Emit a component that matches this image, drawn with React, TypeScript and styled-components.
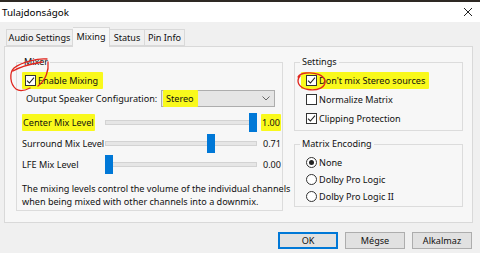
import React from "react";
import styled, { createGlobalStyle } from "styled-components";

const GlobalStyle = createGlobalStyle`
  html, body { margin: 0; padding: 0; background: #f0f0f0; }
  body { font-family: "Noto Sans", "Segoe UI", sans-serif; }
  * { box-sizing: border-box; }
`;

const PANEL_BG = "#f7f7f7";
const HILITE = "#f9f91c";

const Window = styled.div`
  position: relative;
  width: 480px;
  height: 253px;
  overflow: hidden;
  background: #f0f0f0;
  display: flex;
  flex-direction: column;
  font-size: 9.1px;
  color: #111;
`;

const TitleBar = styled.div`
  height: 22px;
  border-top: 2px solid #2e2924;
  background: #fff;
  display: flex;
  align-items: center;
  justify-content: space-between;
  padding: 0 7px 0 2px;
  font-size: 9.8px;
  color: #000;
`;

const Body = styled.div`
  flex: 1;
  display: flex;
  flex-direction: column;
  padding: 7px 7px 0 4px;
`;

const TabRow = styled.div`
  display: flex;
  align-items: flex-end;
  height: 17px;
  padding-left: 2px;
  position: relative;
  z-index: 1;
`;

const Tab = styled.div<{ $active?: boolean; $w: number }>`
  width: ${(p) => p.$w}px;
  height: ${(p) => (p.$active ? 20 : 17)}px;
  margin-bottom: ${(p) => (p.$active ? -1 : 0)}px;
  border: 1px solid #d9d9d9;
  border-bottom: ${(p) => (p.$active ? "none" : "1px solid #d9d9d9")};
  background: ${(p) => (p.$active ? PANEL_BG : "#f0f0f0")};
  display: flex;
  align-items: ${(p) => (p.$active ? "flex-start" : "center")};
  padding-top: ${(p) => (p.$active ? 2 : 0)}px;
  justify-content: center;
  white-space: nowrap;
  & + & {
    border-left: none;
  }
`;

const Panel = styled.div`
  height: 177px;
  border: 1px solid #d9d9d9;
  background: ${PANEL_BG};
  display: flex;
  gap: 11px;
  padding: 15px 8px 10px 11px;
`;

const Group = styled.div<{ $w?: number; $h: number; $pad: string }>`
  position: relative;
  width: ${(p) => (p.$w ? `${p.$w}px` : "auto")};
  height: ${(p) => p.$h}px;
  border: 1px solid #dcdcdc;
  padding: ${(p) => p.$pad};
  display: flex;
  flex-direction: column;
`;

const Caption = styled.span`
  position: absolute;
  top: -8px;
  left: 5px;
  padding: 0 2px;
  line-height: 14px;
  background: ${PANEL_BG};
  color: #111;
`;

const RightColumn = styled.div`
  width: 169px;
  display: flex;
  flex-direction: column;
  gap: 13px;
`;

const Row = styled.div<{ $h: number }>`
  height: ${(p) => p.$h}px;
  display: flex;
  align-items: center;
  white-space: nowrap;
`;

const Highlight = styled.span<{ $pl?: number; $pr?: number }>`
  display: inline-flex;
  align-items: center;
  gap: 2px;
  background: ${HILITE};
  padding: 2px ${(p) => p.$pr ?? 3}px 2px ${(p) => p.$pl ?? 2}px;
  border-radius: 1px;
`;

const Box = styled.span`
  width: 11px;
  height: 11px;
  border: 1px solid #333;
  background: #fff;
  display: inline-flex;
  align-items: center;
  justify-content: center;
  flex: none;
`;

const Round = styled.span`
  width: 11px;
  height: 11px;
  border: 1px solid #333;
  border-radius: 50%;
  background: #fff;
  display: inline-flex;
  align-items: center;
  justify-content: center;
  flex: none;
`;

const Dot = styled.span`
  width: 5px;
  height: 5px;
  border-radius: 50%;
  background: #222;
`;

const OptionRow = styled.div<{ $h: number; $pl?: number }>`
  height: ${(p) => p.$h}px;
  display: flex;
  align-items: center;
  gap: 2px;
  padding-left: ${(p) => p.$pl ?? 0}px;
  white-space: nowrap;
`;

const SpeakerRow = styled(Row)`
  justify-content: space-between;
  padding-left: 4px;
  padding-right: 6px;
`;

const Select = styled.div`
  width: 114px;
  height: 17px;
  background: #e5e5e5;
  border: 1px solid #adadad;
  display: flex;
  align-items: center;
  justify-content: space-between;
  padding: 0 4px 0 1px;
`;

const SliderRow = styled.div<{ $mt?: number }>`
  display: grid;
  grid-template-columns: 83px 152px 1fr;
  align-items: center;
  height: 21px;
  margin-top: ${(p) => p.$mt ?? 0}px;
  white-space: nowrap;
`;

const Track = styled.div`
  position: relative;
  height: 21px;
  display: flex;
  align-items: center;
  &::before {
    content: "";
    flex: 1;
    height: 3px;
    background: #e6e6e6;
    border: 1px solid #d3d3d3;
  }
`;

const Thumb = styled.span`
  position: absolute;
  top: 1px;
  width: 8px;
  height: 19px;
  background: #0078d7;
`;

const Value = styled.span`
  justify-self: end;
  display: inline-flex;
`;

const Description = styled.p`
  margin: 7px 0 0 0;
  line-height: 13px;
  white-space: nowrap;
`;

const ButtonRow = styled.div`
  display: flex;
  justify-content: flex-end;
  gap: 7px;
  margin-top: 9px;
  padding-right: 1px;
`;

const Button = styled.div<{ $default?: boolean }>`
  width: 60px;
  height: 17px;
  background: #e1e1e1;
  border: 1px solid ${(p) => (p.$default ? "#0078d7" : "#adadad")};
  box-shadow: ${(p) => (p.$default ? "inset 0 0 0 1px #0078d7" : "none")};
  display: flex;
  align-items: center;
  justify-content: center;
  color: #111;
`;

const Marks = styled.svg`
  position: absolute;
  left: 0;
  top: 0;
  pointer-events: none;
`;

const Check = () => (
  <svg width="9" height="9" viewBox="0 0 9 9">
    <path d="M1 4.6 L3.4 7 L8 1.6" fill="none" stroke="#222" strokeWidth="1.1" />
  </svg>
);

const CheckBox = ({ checked }: { checked?: boolean }) => (
  <Box>{checked && <Check />}</Box>
);

const Radio = ({ checked }: { checked?: boolean }) => (
  <Round>{checked && <Dot />}</Round>
);

const Slider = ({ value }: { value: number }) => (
  <Track>
    <Thumb style={{ left: `${value * (152 - 8)}px` }} />
  </Track>
);

export default function App() {
  return (
    <>
      <GlobalStyle />
      <Window>
        <TitleBar>
          <span>Tulajdonságok</span>
          <svg width="10" height="10" viewBox="0 0 10 10">
            <path d="M1 1 L9 9 M9 1 L1 9" stroke="#222" strokeWidth="1" />
          </svg>
        </TitleBar>
        <Body>
          <TabRow>
            <Tab $w={67}>Audio Settings</Tab>
            <Tab $w={37} $active>
              Mixing
            </Tab>
            <Tab $w={35}>Status</Tab>
            <Tab $w={40}>Pin Info</Tab>
          </TabRow>
          <Panel>
            <Group $w={267} $h={149} $pad="8px 1px 0 5px">
              <Caption>Mixer</Caption>
              <Row $h={18}>
                <Highlight $pl={3} $pr={5}>
                  <CheckBox checked />
                  Enable Mixing
                </Highlight>
              </Row>
              <SpeakerRow $h={18}>
                <span>Output Speaker Configuration:</span>
                <Select>
                  <Highlight $pl={3} $pr={4}>Stereo</Highlight>
                  <svg width="8" height="5" viewBox="0 0 8 5">
                    <path d="M0.5 0.5 L4 4 L7.5 0.5" fill="none" stroke="#666" strokeWidth="1" />
                  </svg>
                </Select>
              </SpeakerRow>
              <SliderRow $mt={5}>
                <span>
                  <Highlight $pl={1} $pr={1}>Center Mix Level</Highlight>
                </span>
                <Slider value={1} />
                <Value>
                  <Highlight $pl={1} $pr={1}>1.00</Highlight>
                </Value>
              </SliderRow>
              <SliderRow>
                <span>Surround Mix Level</span>
                <Slider value={0.71} />
                <Value>0.71</Value>
              </SliderRow>
              <SliderRow>
                <span>LFE Mix Level</span>
                <Slider value={0} />
                <Value>0.00</Value>
              </SliderRow>
              <Description>
                The mixing levels control the volume of the individual channels
                <br />
                when being mixed with other channels into a downmix.
              </Description>
            </Group>
            <RightColumn>
              <Group $h={69} $pad="8px 0 0 6px">
                <Caption>Settings</Caption>
                <Row $h={19}>
                  <Highlight $pl={5} $pr={4}>
                    <CheckBox checked />
                    Don't mix Stereo sources
                  </Highlight>
                </Row>
                <OptionRow $h={19} $pl={5}>
                  <CheckBox />
                  Normalize Matrix
                </OptionRow>
                <OptionRow $h={19} $pl={5}>
                  <CheckBox checked />
                  Clipping Protection
                </OptionRow>
              </Group>
              <Group $h={63} $pad="9px 0 0 11px">
                <Caption>Matrix Encoding</Caption>
                <OptionRow $h={17}>
                  <Radio checked />
                  None
                </OptionRow>
                <OptionRow $h={17}>
                  <Radio />
                  Dolby Pro Logic
                </OptionRow>
                <OptionRow $h={17}>
                  <Radio />
                  Dolby Pro Logic II
                </OptionRow>
              </Group>
            </RightColumn>
          </Panel>
          <ButtonRow>
            <Button $default>OK</Button>
            <Button>Mégse</Button>
            <Button>Alkalmaz</Button>
          </ButtonRow>
        </Body>
        <Marks width="480" height="253" viewBox="0 0 480 253">
          <g fill="none" stroke="#e0261e" strokeWidth="1.3" strokeLinecap="round">
            <path d="M47 59 C38 58 22 62 14 68 C9 73 10 84 16 89 C20 92 26 90 30 88" />
            <path d="M48 62 C49 70 46 80 38 86" />
            <path d="M13 71 C20 67 30 64 42 62" />
            <path d="M300 76 C296 81 298 88 308 89.5 C318 91 326 87 325 81 C324 75 315 72 306 73 C302 73.5 299 75 298 77" />
          </g>
        </Marks>
      </Window>
    </>
  );
}
